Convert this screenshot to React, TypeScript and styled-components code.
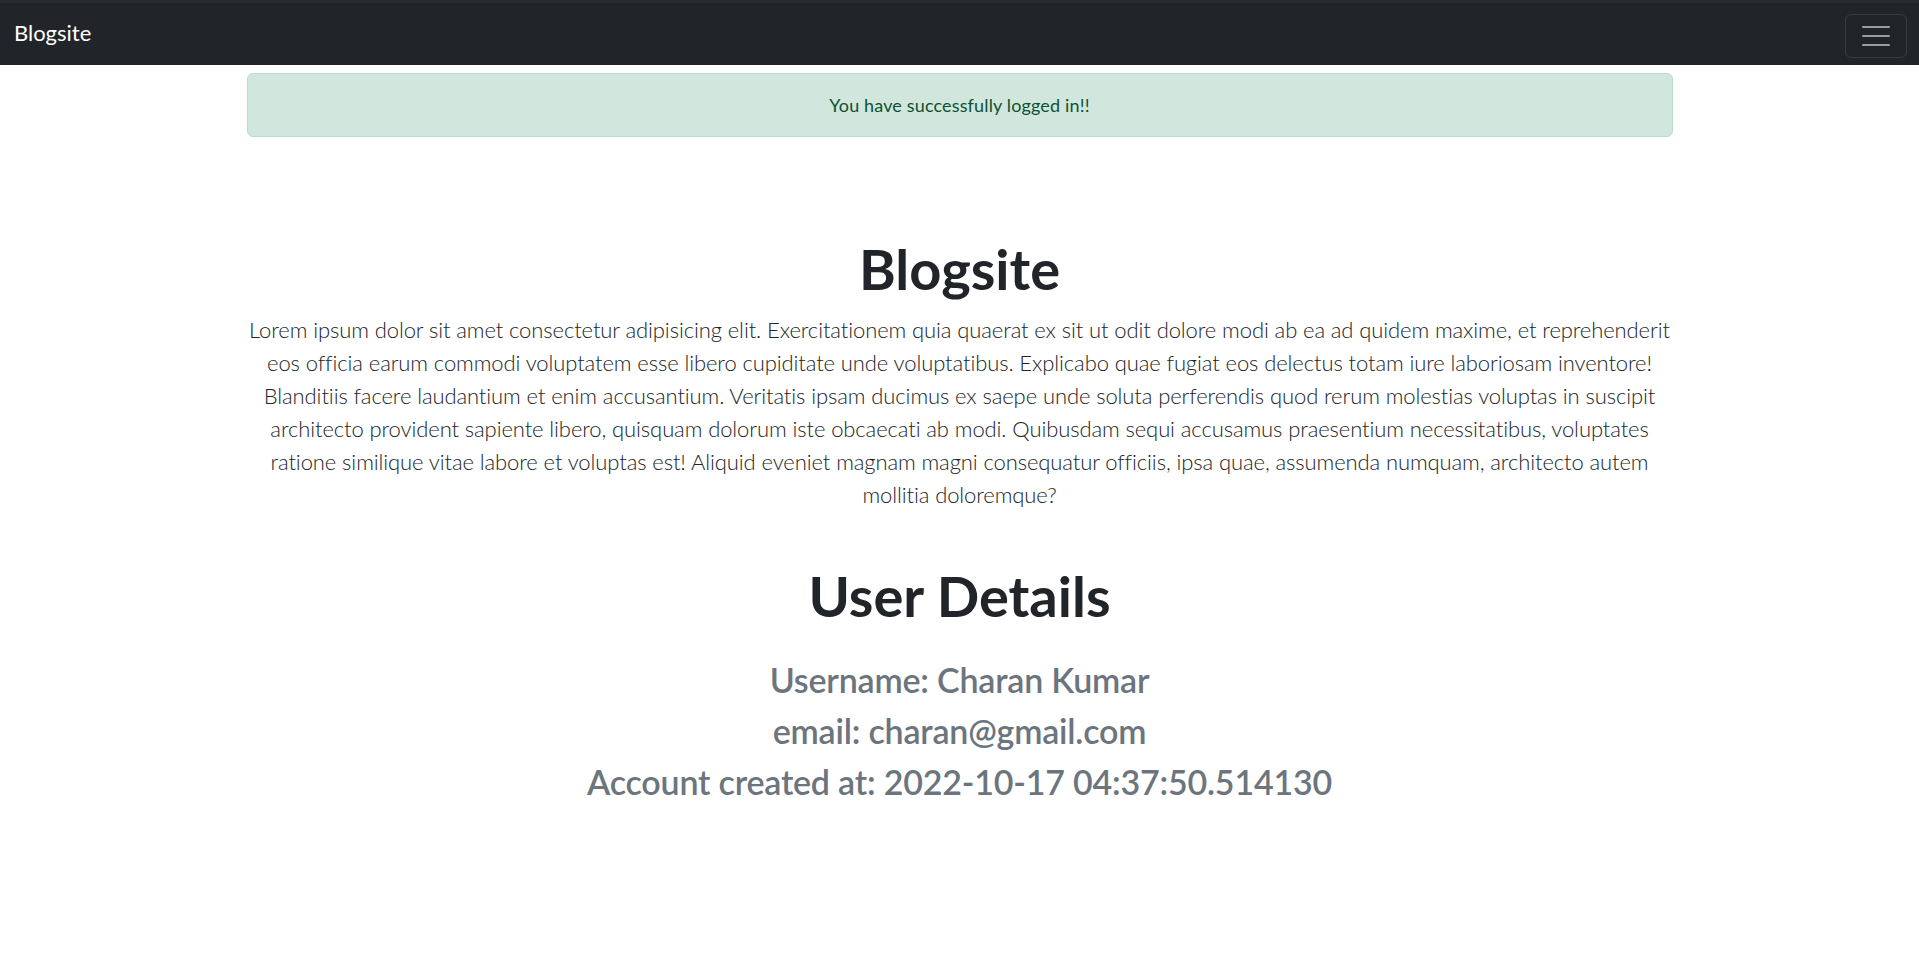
import * as React from 'react';
import styled, { createGlobalStyle } from 'styled-components';

const GlobalStyle = createGlobalStyle`
  * { box-sizing: border-box; }
  body {
    margin: 0;
    font-family: Lato, "Noto Sans", sans-serif;
    color: #212529;
    background: #fff;
  }
`;

const TopStrip = styled.div`
  height: 3px;
  background: #2b2c2e;
`;

const Navbar = styled.nav`
  display: flex;
  align-items: center;
  justify-content: space-between;
  height: 62px;
  padding: 0 12px 0 14px;
  background: #212529;
`;

const Brand = styled.a`
  color: #fff;
  font-size: 22px;
  font-weight: 400;
  text-decoration: none;
  padding-bottom: 3px;
`;

const Toggler = styled.button`
  display: flex;
  align-items: center;
  justify-content: center;
  width: 62px;
  height: 44px;
  margin-top: 4px;
  background: transparent;
  border: 1px solid rgba(255, 255, 255, 0.1);
  border-radius: 6px;
  padding: 0;
`;

const Alert = styled.div`
  width: 1426px;
  margin: 8px auto 0;
  padding: 17px;
  background: #d1e7dd;
  border: 1px solid #badbcc;
  border-radius: 6px;
  color: #0f5132;
  font-size: 18px;
  letter-spacing: 0.15px;
  line-height: 28px;
  text-align: center;
`;

const Main = styled.main`
  width: 1426px;
  margin: 0 auto;
  padding-top: 100px;
  text-align: center;
`;

const Title = styled.h1<{ $top?: number }>`
  margin: ${(p) => p.$top ?? 0}px 0 12px;
  font-size: 56px;
  font-weight: 700;
  line-height: 64px;
`;

const Lead = styled.p`
  margin: 0;
  font-size: 22px;
  font-weight: 300;
  letter-spacing: -0.1px;
  line-height: 33px;
`;

const Details = styled.div`
  margin-top: 31px;
`;

const DetailLine = styled.h2`
  margin: 0 0 9px;
  font-size: 34px;
  font-weight: 600;
  letter-spacing: -0.2px;
  line-height: 42px;
  color: #6c757d;
`;

function HamburgerIcon() {
  return (
    <svg width="28" height="22" viewBox="0 0 28 22">
      <g stroke="rgba(255,255,255,0.55)" strokeWidth="2" strokeLinecap="round">
        <line x1="1" y1="2" x2="27" y2="2" />
        <line x1="1" y1="11" x2="27" y2="11" />
        <line x1="1" y1="20" x2="27" y2="20" />
      </g>
    </svg>
  );
}

const lorem =
  'Lorem ipsum dolor sit amet consectetur adipisicing elit. Exercitationem quia quaerat ex sit ut odit dolore modi ab ea ad quidem maxime, et reprehenderit eos officia earum commodi voluptatem esse libero cupiditate unde voluptatibus. Explicabo quae fugiat eos delectus totam iure laboriosam inventore! Blanditiis facere laudantium et enim accusantium. Veritatis ipsam ducimus ex saepe unde soluta perferendis quod rerum molestias voluptas in suscipit architecto provident sapiente libero, quisquam dolorum iste obcaecati ab modi. Quibusdam sequi accusamus praesentium necessitatibus, voluptates ratione similique vitae labore et voluptas est! Aliquid eveniet magnam magni consequatur officiis, ipsa quae, assumenda numquam, architecto autem mollitia doloremque?';

export default function App() {
  return (
    <>
      <GlobalStyle />
      <TopStrip />
      <Navbar>
        <Brand href="#">Blogsite</Brand>
        <Toggler aria-label="Toggle navigation">
          <HamburgerIcon />
        </Toggler>
      </Navbar>
      <Alert>You have successfully logged in!!</Alert>
      <Main>
        <Title>Blogsite</Title>
        <Lead>{lorem}</Lead>
        <Title $top={53}>User Details</Title>
        <Details>
          <DetailLine>Username: Charan Kumar</DetailLine>
          <DetailLine>email: charan@gmail.com</DetailLine>
          <DetailLine>Account created at: 2022-10-17 04:37:50.514130</DetailLine>
        </Details>
      </Main>
    </>
  );
}
